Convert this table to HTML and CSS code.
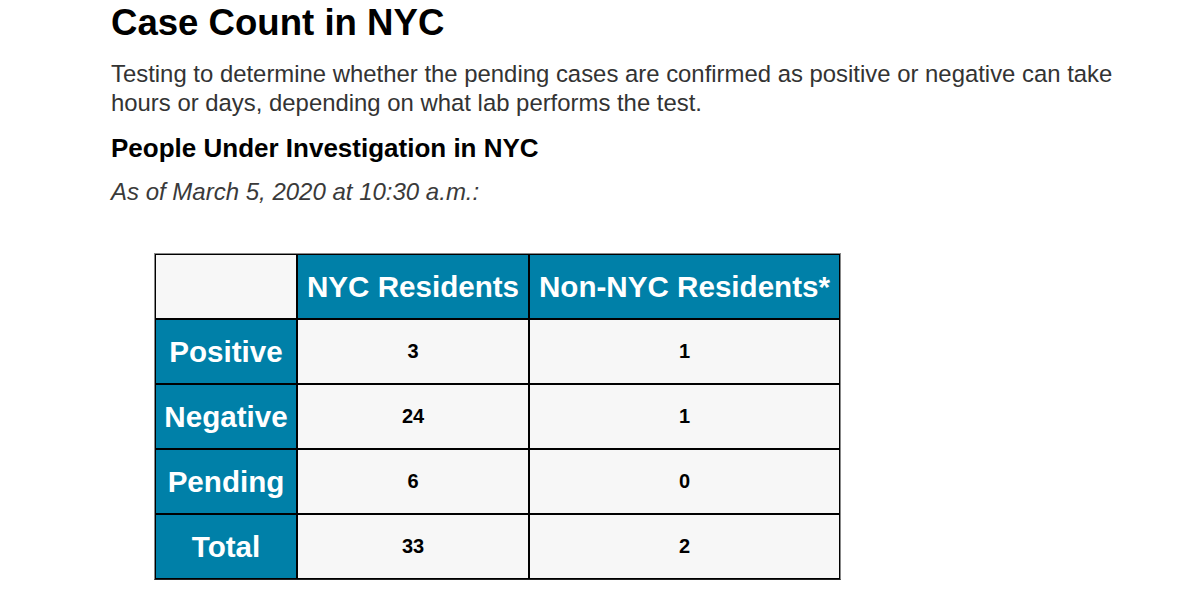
FILE: index.html
```html
<!DOCTYPE html>
<html lang="en">
<head>
<meta charset="utf-8">
<title>Case Count in NYC</title>
<link rel="stylesheet" href="styles.css">
</head>
<body>
<main class="page">
  <h1 class="title">Case Count in NYC</h1>
  <p class="intro">Testing to determine whether the pending cases are confirmed as positive or negative can take hours or days, depending on what lab performs the test.</p>
  <h3 class="subtitle">People Under Investigation in NYC</h3>
  <p class="asof">As of March 5, 2020 at 10:30 a.m.:</p>
  <table class="cases">
    <thead>
      <tr>
        <th class="corner c1"></th>
        <th class="head c2">NYC Residents</th>
        <th class="head c3">Non-NYC Residents*</th>
      </tr>
    </thead>
    <tbody>
      <tr><th class="head">Positive</th><td>3</td><td>1</td></tr>
      <tr><th class="head">Negative</th><td>24</td><td>1</td></tr>
      <tr><th class="head">Pending</th><td>6</td><td>0</td></tr>
      <tr><th class="head">Total</th><td>33</td><td>2</td></tr>
    </tbody>
  </table>
</main>
</body>
</html>
```

FILE: styles.css
```css
html, body {
  margin: 0;
  padding: 0;
  background: #ffffff;
}

body {
  font-family: "Liberation Sans", Arial, sans-serif;
  color: #000;
}

.page {
  padding: 3px 0 0 111px;
}

.title {
  margin: 0;
  font-size: 36.6px;
  line-height: 40px;
  font-weight: bold;
  color: #000;
}

.intro {
  margin: 16px 0 0;
  width: 1020px;
  font-size: 23.9px;
  line-height: 29px;
  color: #333;
}

.subtitle {
  margin: 16px 0 0;
  font-size: 26px;
  line-height: 30px;
  font-weight: bold;
  color: #000;
}

.asof {
  margin: 14px 0 0;
  font-size: 24px;
  line-height: 29px;
  font-style: italic;
  color: #3a3a3a;
}

.cases {
  margin: 47px 0 0 43px;
  border-collapse: separate;
  border-spacing: 0;
  border: 1px solid #888;
  border-bottom-color: #222;
  table-layout: fixed;
  width: 687px;
}

.cases th,
.cases td {
  box-sizing: border-box;
  height: 65px;
  border: 1px solid #000;
  padding: 0;
  text-align: center;
  vertical-align: middle;
  background: #f7f7f7;
}

.cases .c1 { width: 142px; }
.cases .c2 { width: 232px; }
.cases .c3 { width: 311px; }

.cases .head {
  background: #0080a8;
  color: #fff;
  font-size: 29.6px;
  font-weight: bold;
}

.cases .corner {
  background: #f7f7f7;
}

.cases td {
  font-size: 20px;
  font-weight: bold;
  color: #000;
}
```
